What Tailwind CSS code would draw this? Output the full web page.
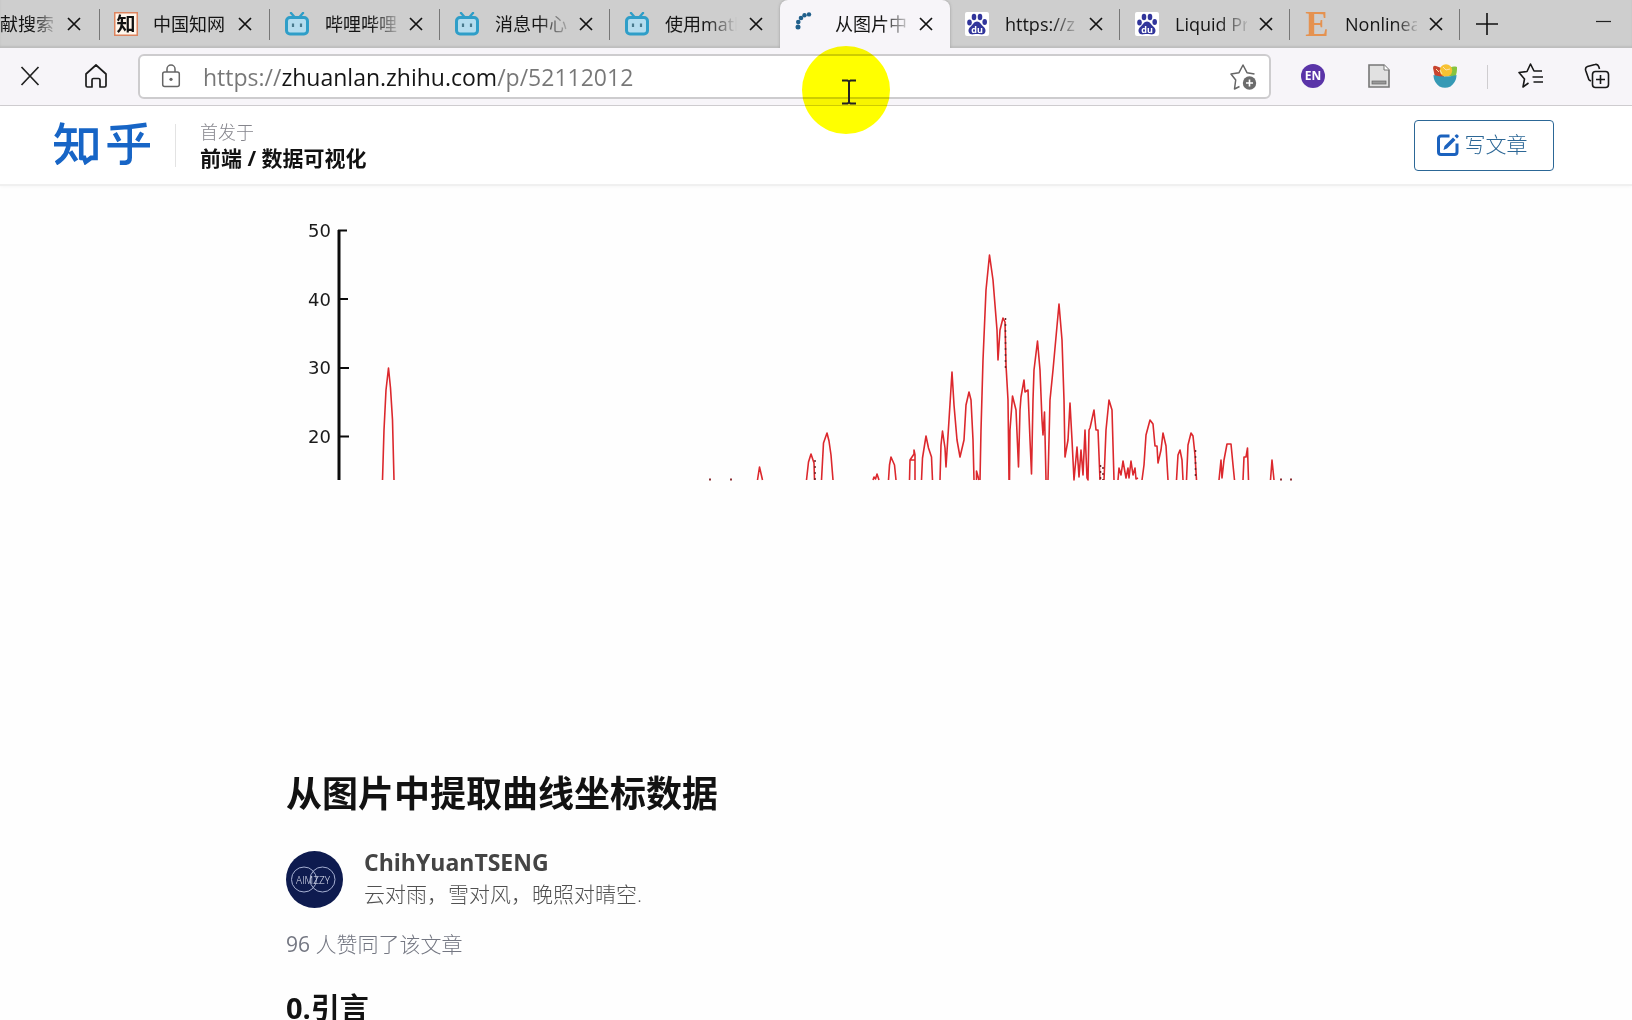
<!DOCTYPE html>
<html lang="zh-CN">
<head>
<meta charset="utf-8">
<meta name="viewport" content="width=device-width, initial-scale=1">
<title>从图片中提取曲线坐标数据</title>
<script src="https://cdn.jsdelivr.net/npm/@tailwindcss/browser@4"></script>
</head>
<body class="relative flex h-screen flex-col overflow-hidden bg-[#fefefe] font-['Open_Sans','Noto_Sans_CJK_SC',sans-serif] text-[#121212]">

<svg class="hidden" aria-hidden="true">
  <symbol id="close" viewBox="0 0 14 14"><path d="M1 1l12 12M13 1L1 13" fill="none" stroke="#111" stroke-width="1.7"/></symbol>
  <symbol id="bili" viewBox="0 0 24 24">
    <path d="M6 1l3.500 4M18 1l-3.500 4" fill="none" stroke="#2f9ec8" stroke-width="2.400" stroke-linecap="round"/>
    <rect x="1.500" y="5.500" width="21" height="16.500" rx="3.500" fill="#b4dcee" stroke="#2f9ec8" stroke-width="3"/>
    <path d="M8 11.500v3.500M16 11.500v3.500" stroke="#48798c" stroke-width="2.200"/>
  </symbol>
  <symbol id="baidu" viewBox="0 0 24 24">
    <rect width="24" height="24" rx="2" fill="#fff"/>
    <g fill="#31359b"><ellipse cx="4.500" cy="10.500" rx="2.300" ry="3"/><ellipse cx="9" cy="5" rx="2.300" ry="3.200"/><ellipse cx="15" cy="5" rx="2.300" ry="3.200"/><ellipse cx="19.700" cy="10" rx="2.300" ry="3"/>
    <path d="M12 9.500c3 0 4 3 6 4.800 2.600 2.300 2.800 4 2.300 5.700-.8 2.400-3 2.700-5 2.300-2-.3-4.600-.3-6.600 0-2 .3-4.200 0-5-2.300-.5-1.700-.3-3.400 2.300-5.700 2-1.800 3-4.800 6-4.800z"/></g>
    <text x="12" y="20.500" text-anchor="middle" font-family="Open Sans, sans-serif" font-weight="700" font-size="9" fill="#fff">du</text>
  </symbol>
</svg>

<nav aria-label="标签页" class="flex h-12 shrink-0 items-stretch bg-[#cecece] text-[18px] leading-7 whitespace-nowrap text-[#151515] shadow-[inset_0_-2px_2px_#bdbdbd]">
  <div class="flex w-25 shrink-0 items-center">
    <a href="#" class="w-[54px] [mask-image:linear-gradient(to_right,black_60%,#0003)]">献搜索</a>
    <button aria-label="关闭" class="ml-[13px]"><svg class="size-[14px]"><use href="#close"/></svg></button>
    <span class="ml-auto h-[31px] w-px bg-[#777]"></span>
  </div>
  <div class="flex w-[170px] shrink-0 items-center pl-[14px]">
    <svg class="size-6" viewBox="0 0 24 24"><rect x=".75" y=".75" width="22.500" height="22.500" fill="#fff6ec" stroke="#dd8560" stroke-width="1.500"/><text x="12" y="19" text-anchor="middle" font-family="Noto Sans CJK SC, sans-serif" font-weight="700" font-size="19" fill="#111">知</text></svg>
    <a href="#" class="ml-[15px] w-[72px]">中国知网</a>
    <button aria-label="关闭" class="ml-[13px]"><svg class="size-[14px]"><use href="#close"/></svg></button>
    <span class="ml-auto h-[31px] w-px bg-[#777]"></span>
  </div>
  <div class="flex w-[170px] shrink-0 items-center pl-[15px]">
    <svg class="size-6"><use href="#bili"/></svg>
    <a href="#" class="ml-4 w-[72px] [mask-image:linear-gradient(to_right,black_65%,#0003)]">哔哩哔哩</a>
    <button aria-label="关闭" class="ml-3"><svg class="size-[14px]"><use href="#close"/></svg></button>
    <span class="ml-auto h-[31px] w-px bg-[#777]"></span>
  </div>
  <div class="flex w-[170px] shrink-0 items-center pl-[15px]">
    <svg class="size-6"><use href="#bili"/></svg>
    <a href="#" class="ml-4 w-[72px] [mask-image:linear-gradient(to_right,black_60%,#0003)]">消息中心</a>
    <button aria-label="关闭" class="ml-3"><svg class="size-[14px]"><use href="#close"/></svg></button>
    <span class="ml-auto h-[31px] w-px bg-[#777]"></span>
  </div>
  <div class="flex w-[170px] shrink-0 items-center pl-[15px]">
    <svg class="size-6"><use href="#bili"/></svg>
    <a href="#" class="ml-4 w-[72px] [mask-image:linear-gradient(to_right,black_60%,transparent)]">使用matl</a>
    <button aria-label="关闭" class="ml-3"><svg class="size-[14px]"><use href="#close"/></svg></button>
  </div>
  <div class="flex w-[170px] shrink-0 items-center rounded-t-lg bg-[#f7f5f9] pl-[15px] shadow-[0_0_3px_#999] [clip-path:inset(0_-4px_0_-4px)]">
    <svg class="size-6" viewBox="0 0 24 24"><g fill="#1f5f8b"><circle cx="3" cy="15" r="2.500"/><circle cx="3.300" cy="10" r="2.300"/><circle cx="6" cy="6" r="2.300"/><circle cx="9.500" cy="3.300" r="2.200"/><circle cx="14" cy="2.400" r="2.200"/></g></svg>
    <a href="#" aria-current="page" class="ml-4 w-[72px] [mask-image:linear-gradient(to_right,black_65%,#0003)]">从图片中</a>
    <button aria-label="关闭" class="ml-3"><svg class="size-[14px]"><use href="#close"/></svg></button>
  </div>
  <div class="flex w-[170px] shrink-0 items-center pl-[15px]">
    <svg class="size-6"><use href="#baidu"/></svg>
    <a href="#" class="ml-4 w-[72px] [mask-image:linear-gradient(to_right,black_65%,#0002)]">https://z</a>
    <button aria-label="关闭" class="ml-3"><svg class="size-[14px]"><use href="#close"/></svg></button>
    <span class="ml-auto h-[31px] w-px bg-[#777]"></span>
  </div>
  <div class="flex w-[170px] shrink-0 items-center pl-[15px]">
    <svg class="size-6"><use href="#baidu"/></svg>
    <a href="#" class="ml-4 w-[72px] [mask-image:linear-gradient(to_right,black_60%,#0002)]">Liquid Pr</a>
    <button aria-label="关闭" class="ml-3"><svg class="size-[14px]"><use href="#close"/></svg></button>
    <span class="ml-auto h-[31px] w-px bg-[#777]"></span>
  </div>
  <div class="flex w-[170px] shrink-0 items-center pl-[15px]">
    <svg class="size-6" viewBox="0 0 24 24"><text x="12" y="24" text-anchor="middle" font-family="Liberation Serif, serif" font-weight="700" font-size="35" fill="#e59250">E</text></svg>
    <a href="#" class="ml-4 w-[72px] [mask-image:linear-gradient(to_right,black_70%,#0002)]">Nonlinea</a>
    <button aria-label="关闭" class="ml-3"><svg class="size-[14px]"><use href="#close"/></svg></button>
    <span class="ml-auto h-[31px] w-px bg-[#777]"></span>
  </div>
  <button aria-label="新建标签页" class="ml-4 shrink-0"><svg class="size-[22px]" viewBox="0 0 22 22"><path d="M11 0v22M0 11h22" stroke="#111" stroke-width="1.600"/></svg></button>
  <button aria-label="最小化" class="mr-5 mb-1.5 ml-auto shrink-0"><svg class="size-4" viewBox="0 0 16 16"><path d="M0 8.500h15" stroke="#222" stroke-width="1.200"/></svg></button>
</nav>

<div class="flex h-[58px] shrink-0 items-center border-b border-[#cfcdd0] bg-[#f7f5f9] pr-[22px] pl-5">
  <button aria-label="停止" class="mb-0.5"><svg class="size-5" viewBox="0 0 20 20"><path d="M1.500 1l17 18M18.500 1l-17 18" fill="none" stroke="#222" stroke-width="1.700"/></svg></button>
  <button aria-label="主页" class="mb-0.5 ml-11"><svg class="size-6" viewBox="0 0 24 24"><path d="M2 10L12 1l10 9v11.500a1.500 1.500 0 0 1-1.500 1.500H16v-7a1.500 1.500 0 0 0-1.500-1.500h-5A1.500 1.500 0 0 0 8 16v7H3.500A1.500 1.500 0 0 1 2 21.500z" fill="none" stroke="#1c1c1c" stroke-width="1.700" stroke-linejoin="round"/></svg></button>
  <div class="ml-[30px] flex h-[45px] min-w-0 flex-1 items-center rounded-md border-2 border-[#cdccce] bg-white pr-3 pl-[21px]">
    <svg class="mb-0.5 h-6 w-5 shrink-0" viewBox="0 0 20 24"><path d="M6 8V5a4 4 0 0 1 8 0v3" fill="none" stroke="#666" stroke-width="1.500"/><rect x="1.700" y="8" width="16.600" height="14.500" rx="2" fill="none" stroke="#666" stroke-width="1.500"/><circle cx="10" cy="15.300" r="1.600" fill="#666"/></svg>
    <input type="text" aria-label="地址栏" value="https://zhuanlan.zhihu.com/p/52112012" class="ml-[22px] h-10 min-w-0 flex-1 bg-[linear-gradient(to_right,#777_79px,#151515_79px,#151515_294px,#777_294px)] bg-clip-text text-[23px] text-transparent outline-none">
    <button aria-label="收藏"><svg class="size-[27px]" viewBox="0 0 27 27"><path d="M9.500 23.500l-5 2.500 1.200-9L1 11l8-1.300L13 2l4 7.700 7.500 1.300" fill="none" stroke="#666" stroke-width="1.500" stroke-linejoin="round"/><circle cx="19.500" cy="20" r="6.700" fill="#6b6b6b"/><path d="M19.500 16.500v7M16 20h7" stroke="#fff" stroke-width="1.600"/></svg></button>
  </div>
  <button aria-label="翻译" class="mb-0.5 ml-[30px] flex size-6 items-center justify-center rounded-full bg-[#5a34a8] text-[12px] font-bold text-white">EN</button>
  <button aria-label="文档" class="mb-0.5 ml-[42px]"><svg class="size-6" viewBox="0 0 24 24"><path d="M2 1h15l5 5v17H2z" fill="#e1e1e1" stroke="#777" stroke-width="1.600"/><path d="M17 1v5h5" fill="#fff" stroke="#777"/><rect x="5" y="17" width="14" height="3" fill="#999" stroke="#666" stroke-width=".7"/></svg></button>
  <button aria-label="扩展" class="mb-0.5 ml-[42px]"><svg class="size-6" viewBox="0 0 24 24"><path d="M0 4q0-3 3-2l8 3v8l-9 0z" fill="#c8442f"/><path d="M24 3c-4-1-7 0-8 2l-1 7 7 1c2-3 2-7 2-10z" fill="#86c440"/><circle cx="13" cy="6.500" r="6.200" fill="#f7c233"/><path d="M3 5l3 3M7 6l2 4M10 3l3 3 4-1" fill="none" stroke="#fae4b0"/><path d="M.5 11q11.500 3 23 0c0 6-3 9-6 11.500q-5.500 2.500-11 0C3.500 20 .5 17 .5 11z" fill="#3699b5"/></svg></button>
  <span class="ml-[30px] h-6 w-px bg-[#cfcdd0]"></span>
  <button aria-label="收藏夹" class="mb-0.5 ml-[30px]"><svg class="size-[26px]" viewBox="0 0 26 26"><path d="M10.500 20L5 24l1.500-8L1 9.500l8-1L12.500 1 16 8h8M14.500 14H25M15.500 19H25" fill="none" stroke="#181818" stroke-width="1.600" stroke-linejoin="round"/></svg></button>
  <button aria-label="集锦" class="mb-0.5 ml-10"><svg class="size-[26px]" viewBox="0 0 26 26"><path d="M5 17L1.700 7.500C1 5 1.500 4.200 3.500 3.500L11 1.500c2-.6 3 0 3.700 2L15.500 6M5 17l2 1" fill="none" stroke="#181818" stroke-width="1.600"/><rect x="8.500" y="8.500" width="16" height="16" rx="3" fill="none" stroke="#181818" stroke-width="1.600"/><path d="M16.500 12v9M12 16.500h9" stroke="#181818" stroke-width="1.600"/></svg></button>
</div>

<header class="flex h-20 shrink-0 items-center border-b-2 border-[#f0f0f0] bg-white pr-[78px] pl-[54px] shadow-[0_1px_3px_rgba(0,0,0,0.03)]">
  <a href="#" aria-label="知乎" class="mb-1"><svg class="h-[43px] w-24" viewBox="0 0 97 43" fill="none" stroke="#1765c6" stroke-width="4.600">
    <path d="M8.500 .5Q7 9 2 15M6 8.500h17M0 22.300h24.500M15 9v10q0 15-13 22.500M16.500 29.500l6 9.500"/>
    <path d="M27.500 38V8.500h14.500V36h-4.500l-5.500 4-1.500-4h-4"/>
    <path d="M57 6q18-.5 36.500-3.500M54 23.300h43M76.500 5v31q0 5-5 5h-5M61.500 11l4.500 8M89 10.500l-5 8.500"/></svg></a>
  <div class="ml-[25px] h-[43px] w-px bg-[#e3e3e3]"></div>
  <div class="mt-0.5 ml-6">
    <p class="text-[18px] leading-6 font-light text-[#85858c]">首发于</p>
    <a href="#" class="block text-[21px] leading-7 font-bold">前端 / 数据可视化</a>
  </div>
  <button class="ml-auto flex h-[51px] w-[140px] items-center justify-center gap-1.5 rounded border border-[#2c6796] pr-1 text-[21px] font-light text-[#2c6796]"><svg class="size-[22px]" viewBox="0 0 22 22"><path d="M12.500 2H4a2.500 2.500 0 0 0-2.500 2.500v13.500A2.500 2.500 0 0 0 4 20.500h13.500a2.500 2.500 0 0 0 2.500-2.500V9.500" fill="none" stroke="#1b62be" stroke-width="3"/><path d="M6.500 16l1-4 8.500-8.500 2.500 2.500-8.500 8.500zM17.500 2l1.200-1.200q1-1 2 0l.5.500q1 1 0 2L20 4.500z" fill="#1b62be"/></svg>写文章</button>
</header>

<main class="min-h-0 flex-1 overflow-hidden px-6">
  <article class="mx-auto max-w-[1060px]">
    <figure class="h-[582px] pt-6">
      <svg class="w-full" viewBox="286 210 1060 271" role="img" aria-label="曲线图">
        <path d="M339 230V480" stroke="#0b0b0b" stroke-width="3"/>
        <path d="M338 230.500h9M338 299h10M338 368h11M338 436.500h11" stroke="#0b0b0b" stroke-width="2"/>
        <g font-family="DejaVu Sans, sans-serif" font-size="18" fill="#1a1a1a" text-anchor="end"><text x="331" y="237">50</text><text x="331" y="306">40</text><text x="331" y="374">30</text><text x="331" y="443">20</text></g>
        <g fill="none" stroke="#dc282d" stroke-width="1.600" stroke-linejoin="round">
          <path d="M382.500 480L384 430 386 390 388.500 368 390.500 388 392.500 420 394 480"/>
          <path d="M757.500 480l2-13 3 13M806.500 480l2-18 2.500-8 3 9 .5 17M821.500 480l2-37 3.500-10 2 8 2 14 2 25M873 480l1-3 1.500 2 1.500-5 2 6M888.500 480l1-15 1.500-8 3.500 8 1.500 15M909.500 480l.5-20 4-6v-4l1 5v25M910 460h5M921.500 480l1-22 3.500-22 2.500 12 3 9 1 23"/>
          <path d="M940 480L941 445 942.500 431 945 448 946 467 949 420 952 372 954 405 957 440 960 457 964 440 966 405 969 392 971 400 973 440 974 480M976.500 480V471l2.500 9"/>
          <path d="M980 480L981 430 983 360 986 290 989.500 255 993 280 997 330 998 360 1000 330 1003 318 1005 322 1006 365 1008 400 1009 480M1009.500 480L1010 430 1012.500 396 1016 410 1018.500 467 1020 410 1021 397 1024 380 1025 392 1028 390 1030 440 1031.500 474 1033 400 1034 370 1037.500 341 1040 370 1042 420 1043 435 1044.500 412 1046 480"/>
          <path d="M1048 480L1050 400 1053 370 1059 304 1062 340 1064 400 1065 457 1068 440 1070 403 1072 440 1074 480 1077 447 1079 477 1081 450 1083 475 1085 430 1087 478 1088 480 1089 430 1090 428 1094 410 1096 430 1098 430 1100 480M1104 480L1106 430 1109 400 1112 410 1114 480"/>
          <path d="M1118 480L1119 468 1121 475 1123 461 1126 478 1128 468 1129 478 1131 461 1133 475 1135 468 1136 479 1138 478M1142 480L1144 465 1146 435 1150 420 1153 424 1155 446 1157 446 1158 463 1161 450 1163 433 1166 446 1168 480"/>
          <path d="M1176.500 480L1178 455 1180 450 1182 460 1183 480M1186.500 480L1188 445 1191 433 1193 436 1195 455 1196.500 480M1219 480L1221 460 1222 478 1224 460 1227 444 1231 444 1233 465 1234.500 480M1243 480L1244 457 1246 457 1247.500 448 1248.500 480M1270.500 480L1272 460 1274 480"/>
        </g>
        <g stroke="#6d2224" stroke-width="1.500" stroke-dasharray="2 4"><path d="M1005.500 318V368M815 460V480M1100.500 465V480M1103 467V480M1195.500 450V480"/></g>
        <path d="M709 479.500h2M730 479.500h2M1280 479.500h2M1290 479.500h2" stroke="#8b3034" stroke-width="2"/>
      </svg>
    </figure>
    <h1 class="text-[36px] leading-[52px] font-bold">从图片中提取曲线坐标数据</h1>
    <div class="mt-[26px] flex items-center gap-[21px]">
      <svg class="size-[57px] shrink-0" viewBox="0 0 57 57" role="img" aria-label="ChihYuanTSENG"><circle cx="28.500" cy="28.500" r="28.500" fill="#0e1b4f"/><g fill="none" stroke="#a7b1d3" stroke-width="1"><circle cx="18" cy="28.500" r="12.500"/><circle cx="36.500" cy="28.500" r="12.500"/></g><text x="27" y="32.500" text-anchor="middle" font-family="Open Sans, sans-serif" font-weight="300" font-size="10" fill="#e0e4f3">AIMZZY</text></svg>
      <div class="pb-0.5">
        <a href="#" class="block text-[23px] leading-8 font-bold text-[#444]">ChihYuanTSENG</a>
        <p class="text-[21px] leading-8 font-light text-[#505050]">云对雨，雪对风，晚照对晴空.</p>
      </div>
    </div>
    <p class="mt-4 text-[21px] leading-8 font-light text-[#747782]"><span class="font-normal">96</span> 人赞同了该文章</p>
    <h2 class="mt-7 text-[29px] leading-10 font-bold">0.引言</h2>
  </article>
</main>

<div class="pointer-events-none absolute top-[46px] left-[802px] size-[88px] rounded-full bg-[#ffff00] mix-blend-multiply"></div>
<svg class="pointer-events-none absolute top-[79px] left-[842px] h-[26px] w-[14px]" viewBox="0 0 14 26"><path d="M0 1.500h5.500L7 2.500l1.500-1H14M0 24.500h5.500L7 23.500l1.500 1H14M7 2v22" fill="none" stroke="#222" stroke-width="2"/></svg>
</body>
</html>
